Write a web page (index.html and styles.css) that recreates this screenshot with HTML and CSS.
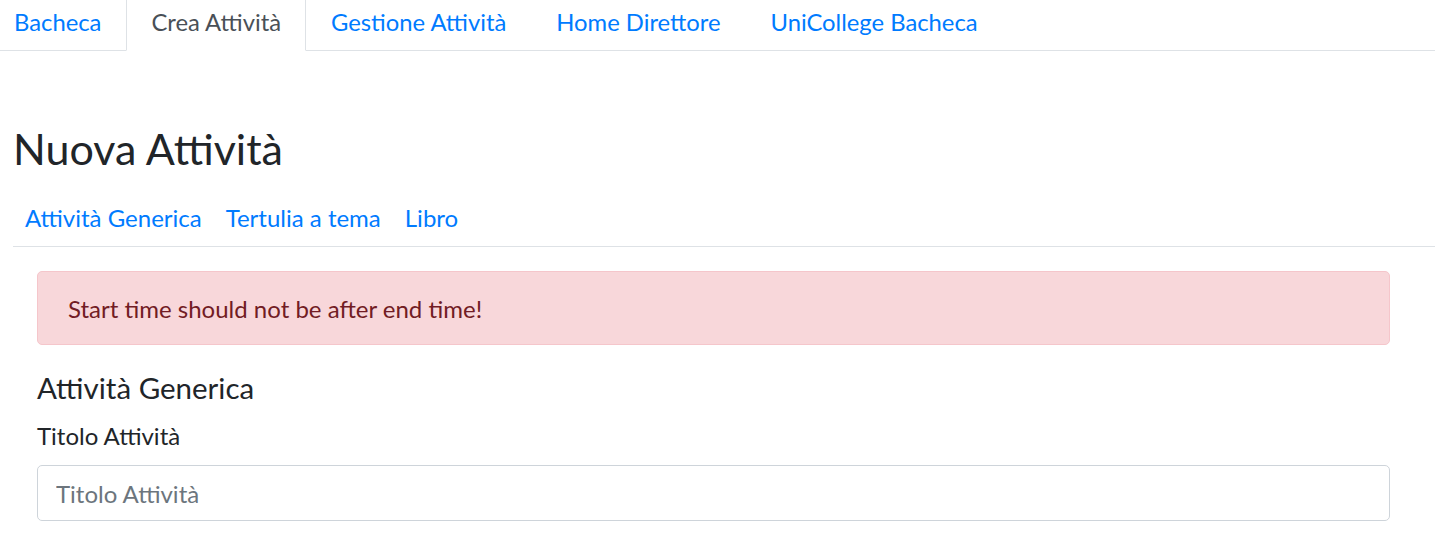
FILE: index.html
```html
<!DOCTYPE html>
<html lang="it">
<head>
<meta charset="utf-8">
<title>Nuova Attività</title>
<link rel="stylesheet" href="styles.css">
</head>
<body>
<ul class="tabs">
  <li class="tab"><a class="tab-link first" href="#">Bacheca</a></li>
  <li class="tab"><a class="tab-link active" href="#">Crea Attività</a></li>
  <li class="tab"><a class="tab-link" href="#">Gestione Attività</a></li>
  <li class="tab"><a class="tab-link" href="#">Home Direttore</a></li>
  <li class="tab"><a class="tab-link" href="#">UniCollege Bacheca</a></li>
</ul>
<main class="main">
  <h1 class="title">Nuova Attività</h1>
  <ul class="subnav">
    <li><a class="subnav-link" href="#">Attività Generica</a></li>
    <li><a class="subnav-link" href="#">Tertulia a tema</a></li>
    <li><a class="subnav-link" href="#">Libro</a></li>
  </ul>
  <section class="panel">
    <div class="alert">Start time should not be after end time!</div>
    <h4 class="section-title">Attività Generica</h4>
    <form class="form">
      <label class="label" for="titolo">Titolo Attività</label>
      <input class="input" id="titolo" type="text" placeholder="Titolo Attività">
    </form>
  </section>
</main>
</body>
</html>
```
FILE: styles.css
```css
html, body {
  margin: 0;
  padding: 0;
  background: #fff;
}
body {
  font-family: Lato, "Open Sans", sans-serif;
  color: #212529;
  font-size: 24px;
  line-height: 30px;
}
a {
  text-decoration: none;
  color: #007bff;
}
.tabs {
  list-style: none;
  margin: 0;
  padding: 0;
  display: flex;
  border-bottom: 1px solid #dee2e6;
}
.tab-link {
  display: block;
  font-size: 23.8px;
  padding: 7px 24px 13px;
  border: 1px solid transparent;
  border-top: 0;
  margin-bottom: -1px;
}
.tab-link.first {
  padding-left: 13px;
}
.tab-link.active {
  color: #495057;
  border-color: #dee2e6;
  border-bottom-color: #fff;
  background: #fff;
}
.main {
  padding: 68px 0 0 13px;
}
.title {
  margin: 0 0 14px;
  font-size: 43px;
  line-height: 60px;
  font-weight: 400;
}
.subnav {
  list-style: none;
  margin: 0;
  padding: 0;
  display: flex;
  border-bottom: 1px solid #dee2e6;
}
.subnav-link {
  display: block;
  padding: 10px 12px 13px;
}
.panel {
  padding: 24px 45px 0 24px;
}
.alert {
  background: #f8d7da;
  border: 1px solid #f5c6cb;
  color: #721c24;
  border-radius: 5px;
  padding: 22px 30px 20px;
}
.section-title {
  margin: 25px 0 0;
  font-size: 29.5px;
  line-height: 35px;
  font-weight: 400;
}
.form {
  margin: 16px 0 0;
  display: flex;
  flex-direction: column;
}
.label {
  display: block;
}
.input {
  margin-top: 14px;
  box-sizing: border-box;
  height: 56px;
  border: 1px solid #ced4da;
  border-radius: 5px;
  padding: 0 18px;
  font-family: inherit;
  font-size: 24px;
  color: #495057;
}
.input::placeholder {
  color: #6c757d;
}
```
